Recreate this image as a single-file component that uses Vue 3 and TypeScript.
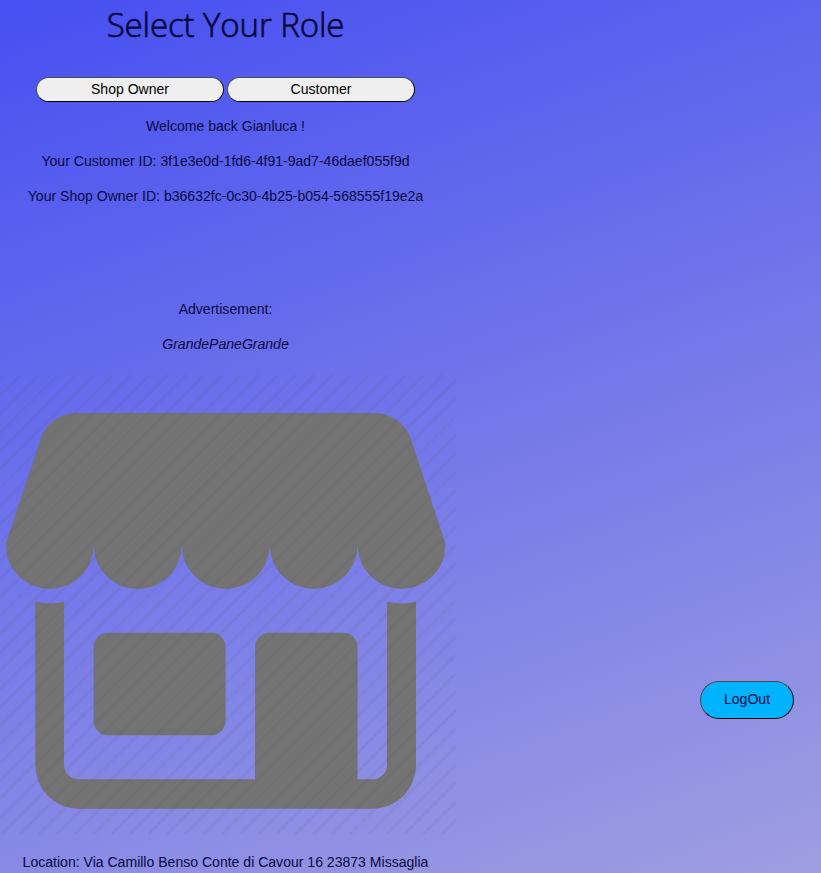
<script setup lang="ts">
interface Role {
  id: string
  label: string
}

const roles: Role[] = [
  { id: 'owner', label: 'Shop Owner' },
  { id: 'customer', label: 'Customer' },
]

const messages: string[] = [
  'Welcome back Gianluca !',
  'Your Customer ID: 3f1e3e0d-1fd6-4f91-9ad7-46daef055f9d',
  'Your Shop Owner ID: b36632fc-0c30-4b25-b054-568555f19e2a',
]

// Diagonal hatch laid over the storefront illustration
const hatch: string = Array.from({ length: 50 }, (_, i) => {
  const sum = 377.7 + i * 18.33
  const left = Math.max(sum - 834, 0)
  const right = Math.min(sum - 375, 456)
  return `M${left.toFixed(2)} ${(sum - left).toFixed(2)}L${right.toFixed(2)} ${(sum - right).toFixed(2)}`
}).join('')
</script>

<template>
  <div class="page">
    <main class="content">
      <h1 class="title">Select Your Role</h1>
      <div class="roles">
        <button v-for="role in roles" :key="role.id" class="role" type="button">{{ role.label }}</button>
      </div>
      <p v-for="message in messages" :key="message" class="line">{{ message }}</p>
      <section class="advert">
        <p class="line">Advertisement:</p>
        <p class="line shop-name">GrandePaneGrande</p>
        <svg class="shop" width="458" height="463" viewBox="0 373 458 463" aria-hidden="true">
          <g fill="#737373">
            <path d="M77 413H374C391 413 405 423 410.500 438L444.300 540Q445.500 543 445.500 545A43.900 43.900 0 0 1 357.600 545A43.900 43.900 0 0 1 269.700 545A43.900 43.900 0 0 1 181.700 545A43.900 43.900 0 0 1 93.700 545A43.900 43.900 0 0 1 5.800 545Q5.800 543 7 540L41 438C46.500 423 60 413 77 413Z" />
            <path d="M35.300 601.500Q49.700 605.500 64 601.500V765A14.500 14.500 0 0 0 78.500 779.300H255V647A14.300 14.300 0 0 1 269.300 632.700H343.200A14.300 14.300 0 0 1 357.500 647V779.300H372.500A14.500 14.500 0 0 0 387 765V601.500Q401.500 605.500 416 601.500V765A43.700 43.700 0 0 1 372.300 808.800H79A43.700 43.700 0 0 1 35.300 765Z" />
            <rect x="93.600" y="632.700" width="132" height="102.600" rx="14.300" />
          </g>
          <path class="hatch" :d="hatch" />
        </svg>
        <p class="line">Location: Via Camillo Benso Conte di Cavour 16 23873 Missaglia</p>
      </section>
    </main>
    <aside class="side">
      <button class="logout" type="button">LogOut</button>
    </aside>
  </div>
</template>

<style>
body {
  margin: 0;
}
</style>

<style scoped>
.page {
  display: flex;
  width: 821px;
  height: 873px;
  overflow: hidden;
  font-family: 'Liberation Sans', Arial, sans-serif;
  font-size: 14.05px;
  line-height: 20px;
  color: #08083e;
  background: linear-gradient(160deg, #464ff2 0%, #9f9ee1 100%);
}

.content {
  width: 451px;
  text-align: center;
}

.title {
  margin: 0;
  height: 77px;
  font-family: 'Open Sans', 'Noto Sans', sans-serif;
  font-size: 33px;
  font-weight: 300;
  line-height: 50px;
  letter-spacing: -0.1px;
  color: #08083e;
  -webkit-text-stroke: 0.7px #08083e;
}

.roles {
  display: flex;
  justify-content: center;
  gap: 3px;
  margin-bottom: 14px;
}

.role {
  box-sizing: border-box;
  width: 188px;
  height: 25px;
  padding: 0 0 2px;
  border: 1px solid;
  border-color: #4c4c4c #000 #000 #4c4c4c;
  border-radius: 13px;
  background: #efefef;
  font: inherit;
  color: #000;
}

.line {
  margin: 0 0 15px;
  white-space: nowrap;
}

.advert {
  margin-top: 93px;
}

.shop-name {
  margin-bottom: 19px;
  font-style: italic;
}

.shop {
  display: block;
  margin-bottom: 16px;
}

.hatch {
  fill: none;
  stroke: #505050;
  stroke-opacity: 0.075;
  stroke-width: 2.8;
}

.side {
  display: flex;
  flex: 1;
  align-items: flex-end;
  justify-content: flex-end;
  padding: 0 27px 154px 0;
}

.logout {
  box-sizing: border-box;
  width: 94px;
  height: 38px;
  padding: 0 0 2px;
  border: 1px solid;
  border-color: #4c4c4c #000 #000 #4c4c4c;
  border-radius: 19px;
  background: #00b3ff;
  font: inherit;
  color: #08083e;
}
</style>
